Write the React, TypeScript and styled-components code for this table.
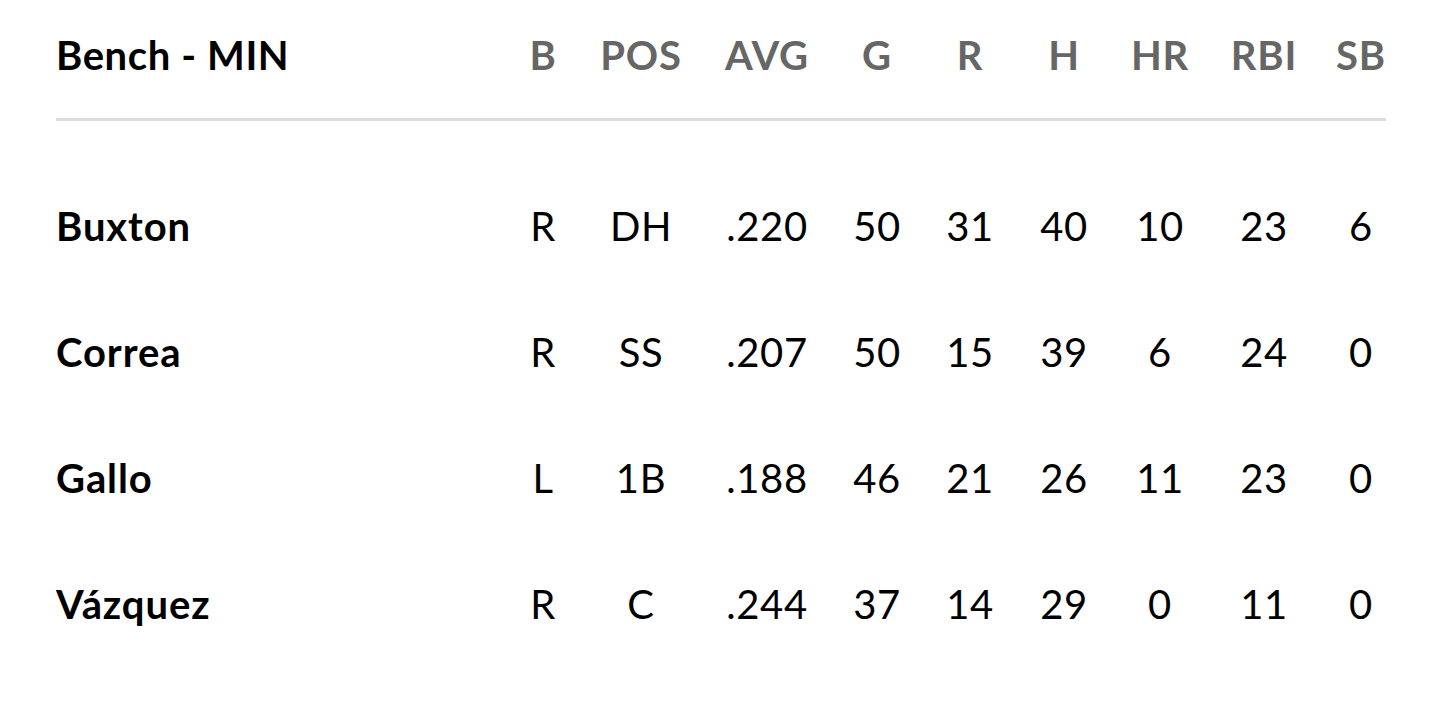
import React from "react";
import styled, { createGlobalStyle } from "styled-components";

const Global = createGlobalStyle`
  html, body { margin: 0; padding: 0; background: #fff; }
  body { font-family: Lato, "Noto Sans", sans-serif; color: #000; }
`;

const COLS = "438px 98px 98px 154px 66px 120px 68px 124px 84px 110px";

const Page = styled.div`
  padding: 0 0 0 56px;
`;

const Table = styled.div`
  width: 1330px;
  overflow: hidden;
`;

const Row = styled.div`
  display: grid;
  grid-template-columns: ${COLS};
  align-items: center;
  width: max-content;
`;

const HeaderRow = styled(Row)`
  height: 110px;
  padding-bottom: 8px;
`;

const Rule = styled.div`
  height: 3px;
  background: #dddddd;
  width: 1330px;
`;

const Body = styled.div`
  padding-top: 42px;
`;

const DataRow = styled(Row)`
  height: 126px;
`;

const Title = styled.div`
  font-size: 40px;
  font-weight: 700;
  letter-spacing: 0.6px;
  color: #000;
  white-space: nowrap;
`;

const HeadCell = styled.div`
  font-size: 40px;
  font-weight: 700;
  letter-spacing: 0.8px;
  color: #666;
  text-align: center;
  white-space: nowrap;
`;

const Name = styled.div`
  font-size: 40px;
  font-weight: 700;
  letter-spacing: 0.9px;
  color: #000;
  white-space: nowrap;
`;

const Cell = styled.div`
  font-size: 40px;
  font-weight: 400;
  letter-spacing: 0.6px;
  color: #000;
  text-align: center;
  white-space: nowrap;
`;

const headers = ["B", "POS", "AVG", "G", "R", "H", "HR", "RBI", "SB"];
const rows: [string, string[]][] = [
  ["Buxton", ["R", "DH", ".220", "50", "31", "40", "10", "23", "6"]],
  ["Correa", ["R", "SS", ".207", "50", "15", "39", "6", "24", "0"]],
  ["Gallo", ["L", "1B", ".188", "46", "21", "26", "11", "23", "0"]],
  ["Vázquez", ["R", "C", ".244", "37", "14", "29", "0", "11", "0"]],
];

export default function App() {
  return (
    <Page>
      <Global />
      <Table>
        <HeaderRow>
          <Title>Bench - MIN</Title>
          {headers.map((h) => (
            <HeadCell key={h}>{h}</HeadCell>
          ))}
        </HeaderRow>
        <Rule />
        <Body>
          {rows.map(([name, vals]) => (
            <DataRow key={name}>
              <Name>{name}</Name>
              {vals.map((v, i) => (
                <Cell key={i}>{v}</Cell>
              ))}
            </DataRow>
          ))}
        </Body>
      </Table>
    </Page>
  );
}
